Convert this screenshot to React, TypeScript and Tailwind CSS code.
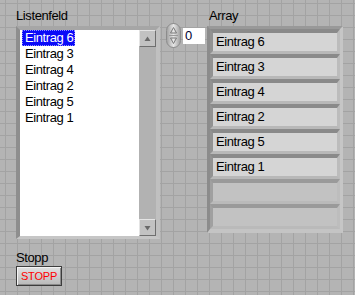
import React from "react";

const font = "font-['Liberation_Sans',Arial,sans-serif]";

function UpArrow() {
  return (
    <svg width="7" height="6" viewBox="0 0 7 6">
      <polygon points="3.5,0.5 6.5,5 0.5,5" fill="#6a6a6a" />
    </svg>
  );
}
function DownArrow() {
  return (
    <svg width="7" height="6" viewBox="0 0 7 6">
      <polygon points="0.5,1 6.5,1 3.5,5.5" fill="#6a6a6a" />
    </svg>
  );
}

function ScrollButton({ up }: { up?: boolean }) {
  return (
    <div className="w-[17px] h-[17px] bg-[#c2c2c2] border border-t-[#e4e4e4] border-l-[#e4e4e4] border-b-[#6e6e6e] border-r-[#6e6e6e] flex items-center justify-center">
      {up ? <UpArrow /> : <DownArrow />}
    </div>
  );
}

function Cell({ text }: { text?: string }) {
  if (text === undefined) {
    return (
      <div className="h-[25px] border-t-[4px] border-l-[3px] border-b-[3px] border-r-[3px] border-t-[#9a9a9a] border-l-[#a0a0a0] border-b-[#bababa] border-r-[#bdbdbd] bg-[#c2c2c2]" />
    );
  }
  return (
    <div className="h-[25px] border-t-[4px] border-l-[3px] border-b-[3px] border-r-[3px] border-t-[#8a8a8a] border-l-[#929292] border-b-[#b8b8b8] border-r-[#bcbcbc] bg-[#d5d5d5] flex items-center pl-[3px] text-[13px] leading-[16px] tracking-[-0.4px] text-black">
      {text}
    </div>
  );
}

export default function App() {
  const items = ["Eintrag 6", "Eintrag 3", "Eintrag 4", "Eintrag 2", "Eintrag 5", "Eintrag 1"];
  return (
    <div
      className={`${font} w-[355px] h-[295px] overflow-hidden bg-[#b4b4b4] [background-image:linear-gradient(to_right,#a3a3a3_1px,transparent_1px),linear-gradient(to_bottom,#a3a3a3_1px,transparent_1px)] [background-size:12px_12px] [background-position:5px_3px] flex items-start pl-[16px] pt-[8px]`}
    >
      {/* Left column */}
      <div className="flex flex-col w-[144px]">
        <div className="h-[16px] text-[13px] leading-[16px] tracking-[-0.4px] text-black">Listenfeld</div>
        <div className="mt-[2px] h-[213px] flex border-t-[4px] border-l-[4px] border-b-[3px] border-r-[4px] border-t-[#a6a6a6] border-l-[#8e8e8e] border-b-[#c6c6c6] border-r-[#c0c0c0]">
          <div className="flex-1 bg-white pl-[2px] flex flex-col text-[13px] leading-[16px] tracking-[-0.4px]">
            {items.map((t, i) =>
              i === 0 ? (
                <div key={t} className="h-[16px] flex">
                  <span className="bg-[#0a0af8] text-white pl-[3px] pr-[2px] outline-1 outline-dotted outline-[#9090ff] -outline-offset-1">{t}</span>
                </div>
              ) : (
                <div key={t} className="h-[16px] pl-[3px] text-black">
                  {t}
                </div>
              )
            )}
          </div>
          <div className="w-[17px] bg-[#b2b2b2] flex flex-col justify-between">
            <ScrollButton up />
            <ScrollButton />
          </div>
        </div>
        <div className="mt-[11px] h-[16px] text-[13px] leading-[16px] tracking-[-0.4px] text-black">Stopp</div>
        <div className="w-[46px] h-[20px] border border-[#3c3c3c] bg-gradient-to-b from-[#e2e2e2] to-[#b9b9b9] shadow-[inset_1px_1px_0_#f4f4f4,inset_-1px_-1px_0_#8a8a8a] flex items-center justify-center text-[11px] leading-[14px] tracking-[-0.2px] text-[#ff0000]">
          STOPP
        </div>
      </div>

      {/* Index control */}
      <div className="ml-[6px] mt-[15px] flex items-center gap-[2px]">
        <div className="w-[15px] h-[25px] rounded-full border border-[#8c8c8c] bg-gradient-to-r from-[#a4a4a4] via-[#e6e6e6] to-[#a4a4a4] flex flex-col items-center justify-center gap-[1px]">
          <svg width="7" height="7" viewBox="0 0 7 7">
            <polygon points="3.5,0.5 6.5,6 0.5,6" fill="none" stroke="#7a7a7a" strokeWidth="1" />
          </svg>
          <div className="w-[9px] h-px bg-[#9a9a9a]" />
          <svg width="7" height="7" viewBox="0 0 7 7">
            <polygon points="0.5,1 6.5,1 3.5,6.5" fill="none" stroke="#7a7a7a" strokeWidth="1" />
          </svg>
        </div>
        <div className="w-[22px] h-[16px] bg-white pl-[2px] text-[13px] leading-[16px] text-[#000030]">0</div>
      </div>

      {/* Array */}
      <div className="ml-[2px] flex flex-col">
        <div className="h-[16px] pl-[2px] text-[13px] leading-[16px] tracking-[-0.4px] text-black">Array</div>
        <div className="mt-[2px] w-[136px] border-t-[3px] border-l-[3px] border-b-[4px] border-r-[3px] border-t-[#999999] border-l-[#8c8c8c] border-b-[#c4c4c4] border-r-[#c6c6c6] bg-[#a8a8a8] flex flex-col">
          {items.map((t) => (
            <Cell key={t} text={t} />
          ))}
          <Cell />
          <Cell />
        </div>
      </div>
    </div>
  );
}
